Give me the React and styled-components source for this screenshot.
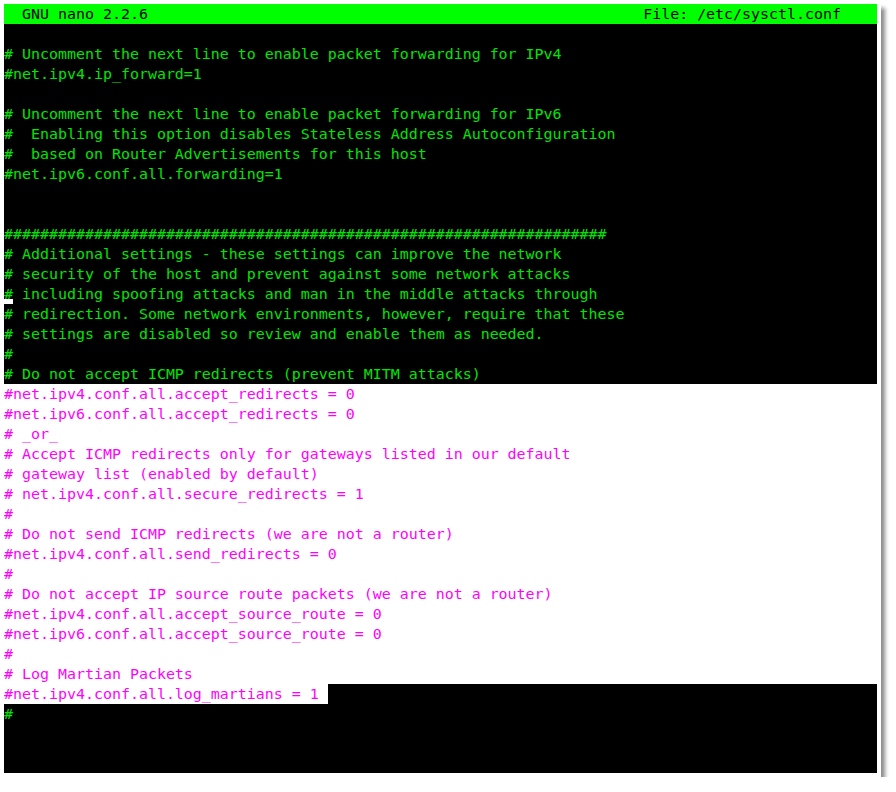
import React from 'react';
import styled, { createGlobalStyle } from 'styled-components';

const GlobalStyle = createGlobalStyle`
  html, body {
    margin: 0;
    padding: 0;
    background: #fff;
  }
`;

const Window = styled.div`
  display: inline-block;
  margin: 4px 0 0 4px;
  padding: 0 4px 4px 0;
  background: #fff;
  box-shadow: 4px 4px 4px rgba(0, 0, 0, 0.45);
`;

const Screen = styled.div`
  width: 873px;
  height: 769px;
  background: #000;
  font-family: "DejaVu Sans Mono", "Liberation Mono", monospace;
  font-size: 14.95px;
  line-height: 20px;
  color: #00e600;
  white-space: pre;
  overflow: hidden;
`;

const TitleBar = styled.div`
  display: flex;
  justify-content: space-between;
  box-sizing: border-box;
  height: 20px;
  padding: 1px 4ch 0 2ch;
  line-height: 19px;
  background: #00ff00;
  color: #000;
`;

const Line = styled.div`
  box-sizing: border-box;
  height: 20px;
  padding-top: 1px;
  line-height: 19px;
  background: ${p => (p.$marked ? '#fff' : 'transparent')};
  color: ${p => (p.$marked ? '#ff00ff' : '#00e600')};
`;

const Mark = styled.span`
  display: inline-block;
  height: 20px;
  margin-top: -1px;
  padding-top: 1px;
  box-sizing: border-box;
  vertical-align: top;
  background: #fff;
  color: #ff00ff;
`;

const Cursor = styled.span`
  display: inline-block;
  width: 1ch;
  height: 19px;
  vertical-align: top;
  box-shadow: inset 0 -5px 0 #fff, inset 0 -1px 0 #000;
`;

const plain = [
  '# Uncomment the next line to enable packet forwarding for IPv4',
  '#net.ipv4.ip_forward=1',
  '',
  '# Uncomment the next line to enable packet forwarding for IPv6',
  '#  Enabling this option disables Stateless Address Autoconfiguration',
  '#  based on Router Advertisements for this host',
  '#net.ipv6.conf.all.forwarding=1',
  '',
  '',
  '#'.repeat(67),
  '# Additional settings - these settings can improve the network',
  '# security of the host and prevent against some network attacks',
];

const afterCursor = [
  '# redirection. Some network environments, however, require that these',
  '# settings are disabled so review and enable them as needed.',
  '#',
  '# Do not accept ICMP redirects (prevent MITM attacks)',
];

const marked = [
  '#net.ipv4.conf.all.accept_redirects = 0',
  '#net.ipv6.conf.all.accept_redirects = 0',
  '# _or_',
  '# Accept ICMP redirects only for gateways listed in our default',
  '# gateway list (enabled by default)',
  '# net.ipv4.conf.all.secure_redirects = 1',
  '#',
  '# Do not send ICMP redirects (we are not a router)',
  '#net.ipv4.conf.all.send_redirects = 0',
  '#',
  '# Do not accept IP source route packets (we are not a router)',
  '#net.ipv4.conf.all.accept_source_route = 0',
  '#net.ipv6.conf.all.accept_source_route = 0',
  '#',
  '# Log Martian Packets',
];

export default function App() {
  return (
    <>
      <GlobalStyle />
      <Window>
        <Screen>
          <TitleBar>
            <span>GNU nano 2.2.6</span>
            <span>File: /etc/sysctl.conf</span>
          </TitleBar>
          <Line />
          {plain.map((text, i) => (
            <Line key={'p' + i}>{text}</Line>
          ))}
          <Line>
            <Cursor>#</Cursor>
            {' including spoofing attacks and man in the middle attacks through'}
          </Line>
          {afterCursor.map((text, i) => (
            <Line key={'a' + i}>{text}</Line>
          ))}
          {marked.map((text, i) => (
            <Line key={'m' + i} $marked>{text}</Line>
          ))}
          <Line>
            <Mark>{'#net.ipv4.conf.all.log_martians = 1 '}</Mark>
          </Line>
          <Line>#</Line>
        </Screen>
      </Window>
    </>
  );
}
